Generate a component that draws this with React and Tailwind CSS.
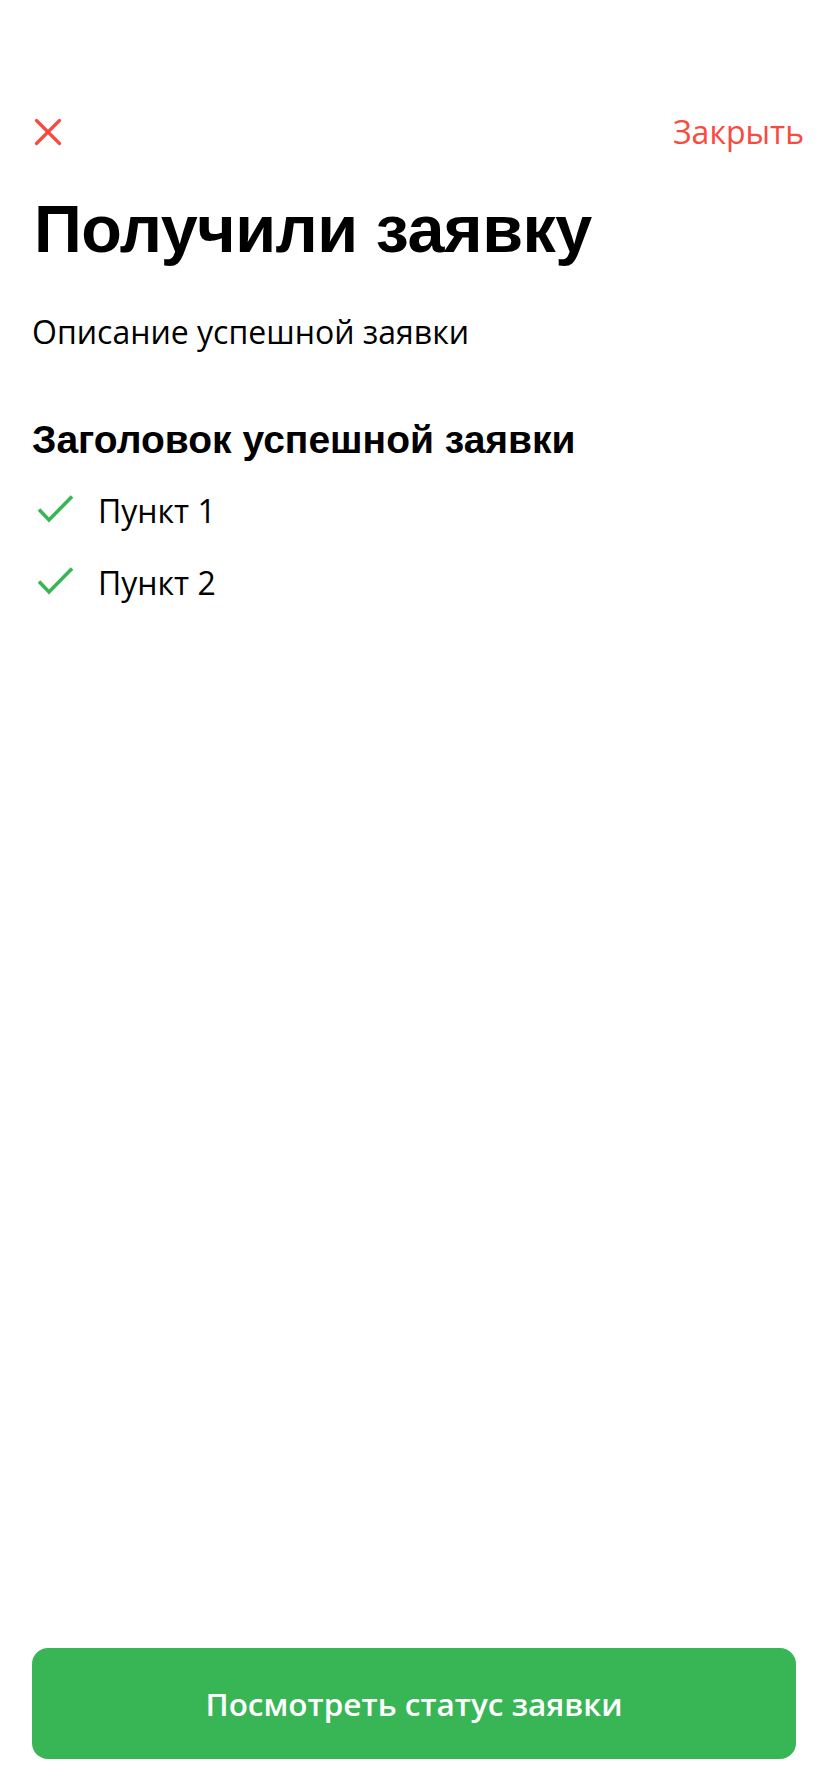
export default function App() {
  const items = ['Пункт 1', 'Пункт 2']

  return (
    <div className="min-h-screen bg-white flex flex-col px-8 font-['Open_Sans','Liberation_Sans',sans-serif] text-black">

      {/* Header */}
      <div className="pt-[112px] h-[152px] flex items-center justify-between">
        <button className="w-[28px] h-[40px] flex items-center ml-[2px]">
          <svg width="28" height="28" viewBox="0 0 28 28" fill="none" stroke="#f94a3f" strokeWidth="3.2" strokeLinecap="round">
            <path d="M2.5 2.5 L25.5 25.5 M25.5 2.5 L2.5 25.5" />
          </svg>
        </button>
        <button className="text-[32px] leading-[40px] text-[#f94a3f] -mr-[8px]">Закрыть</button>
      </div>

      {/* Title */}
      <h1 className="mt-[37px] text-[66.5px] leading-[80px] font-bold tracking-[-0.5px] ml-[2px] font-['Liberation_Sans',Arial,sans-serif]">
        Получили заявку
      </h1>

      <p className="mt-[43px] text-[32px] leading-[40px]">Описание успешной заявки</p>

      <h2 className="mt-[66px] text-[39px] leading-[44px] font-bold font-['Liberation_Sans',Arial,sans-serif]">Заголовок успешной заявки</h2>

      <ul className="mt-[29px] flex flex-col gap-8">
        {items.map((item) => (
          <li key={item} className="flex items-center gap-[22px] h-[40px]">
            <svg width="44" height="40" viewBox="0 0 44 40" fill="none" stroke="#38b656" strokeWidth="3.6">
              <path d="M7 18.5 L17 29 L40 5.5" />
            </svg>
            <span className="text-[32px] leading-[40px]">{item}</span>
          </li>
        ))}
      </ul>

      {/* Bottom action */}
      <div className="mt-auto pb-[33px]">
        <button className="w-full h-[111px] rounded-[16px] bg-[#38b656] text-white text-[31.5px] font-semibold">
          Посмотреть статус заявки
        </button>
      </div>
    </div>
  )
}
